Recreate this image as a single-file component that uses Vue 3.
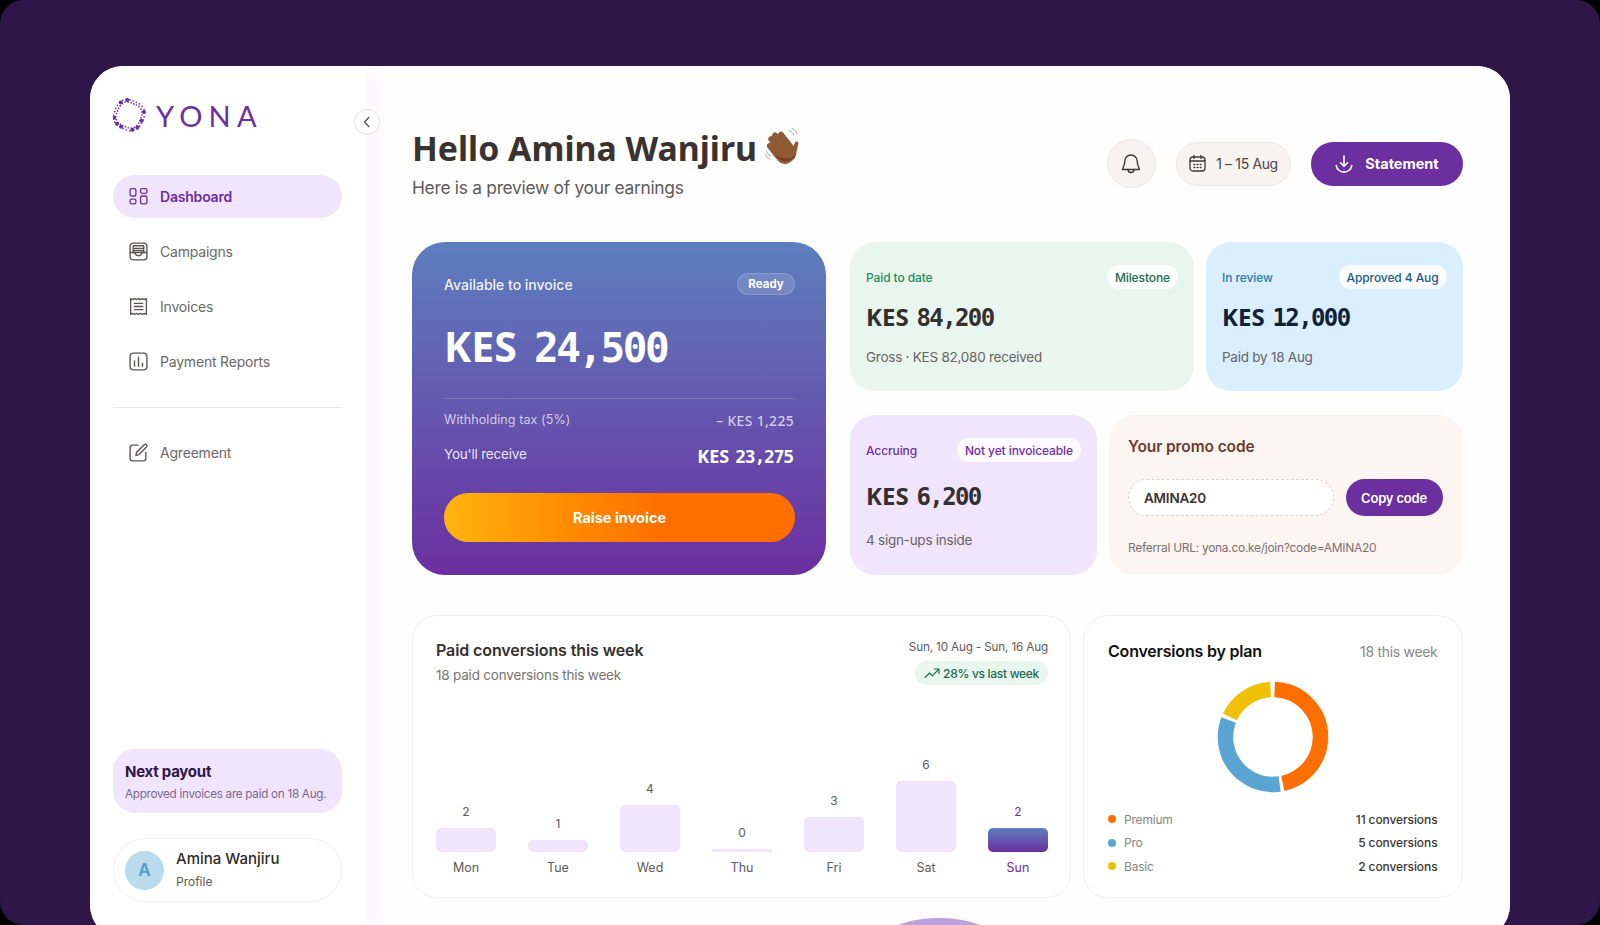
<template>
  <div class="page">
    <div class="window">
      <aside class="sidebar">
        <div class="logo">
          <svg width="34" height="34" viewBox="0 0 34 34">
            <circle v-for="(d, i) in logoDots" :key="i" :cx="d.x" :cy="d.y" :r="d.r" fill="#6b2fa0" />
          </svg>
          <span class="logo-text">YONA</span>
        </div>

        <nav class="nav">
          <a v-for="item in navItems" :key="item.label" class="nav-item" :class="{ active: item.active }">
            <svg width="21" height="21" viewBox="0 0 20 20" fill="none" stroke="currentColor" stroke-width="1.3" stroke-linecap="round" stroke-linejoin="round">
              <path v-for="(p, i) in item.paths" :key="i" :d="p" />
            </svg>
            {{ item.label }}
          </a>
        </nav>
        <div class="side-divider"></div>
        <a class="nav-item">
          <svg width="21" height="21" viewBox="0 0 20 20" fill="none" stroke="currentColor" stroke-width="1.3" stroke-linecap="round" stroke-linejoin="round">
            <path d="M9.5 3H4.5A2.5 2.5 0 0 0 2 5.5v10A2.5 2.5 0 0 0 4.5 18h10a2.5 2.5 0 0 0 2.5-2.5V10" />
            <path d="M7.5 12.8l.7-3 7.2-7.2a1.5 1.5 0 0 1 2.2 2.2l-7.2 7.2z" />
          </svg>
          Agreement
        </a>

        <div class="payout">
          <div class="payout-title">Next payout</div>
          <div class="payout-text">Approved invoices are paid on 18 Aug.</div>
        </div>
        <div class="profile">
          <div class="avatar">A</div>
          <div class="profile-info">
            <div class="profile-name">Amina Wanjiru</div>
            <div class="profile-sub">Profile</div>
          </div>
        </div>
      </aside>

      <button class="collapse">
        <svg width="12" height="12" viewBox="0 0 12 12" fill="none" stroke="#4a4a4a" stroke-width="1.2" stroke-linecap="round" stroke-linejoin="round">
          <path d="M7.8 1.5L3.5 6l4.3 4.5" />
        </svg>
      </button>

      <main class="main">
        <header class="header">
          <div>
            <h1 class="title">
              Hello Amina Wanjiru
              <svg class="wave" width="38" height="38" viewBox="0 0 38 38">
                <g transform="rotate(-38 20 24)" fill="#8f5a34" stroke="#74442a" stroke-width=".5">
                  <rect x="8.500" y="8" width="5.400" height="18" rx="2.700" />
                  <rect x="13.800" y="3.500" width="5.400" height="22" rx="2.700" />
                  <rect x="19.100" y="3" width="5.400" height="22" rx="2.700" />
                  <rect x="24.400" y="6" width="5.200" height="20" rx="2.600" />
                  <rect x="8.500" y="17" width="21" height="19" rx="9" stroke="none" />
                </g>
                <path d="M25 26l5-10.500c.9-1.800 3.700-1 3.300 1.200L31 27c-.9 4-4 6-6 4z" fill="#8f5a34" />
                <path d="M10 27c3 5 8 8.500 14 6.500 3-1 5-3 6-6-2 3-5 4.500-8.500 4.300C17.500 31.500 13 30 10 27z" fill="#6e3f22" />
                <path d="M24 3.500c2.500.8 4 2.400 4.800 4.800M27 1.500c2.500.8 4 2.400 4.800 4.800M1.500 24c.6 2.400 2 3.900 4.300 4.800M.6 27.500c.6 2.200 2 3.700 4.300 4.600" fill="none" stroke="#9a9a9a" stroke-width=".9" stroke-linecap="round" />
              </svg>
            </h1>
            <p class="subtitle">Here is a preview of your earnings</p>
          </div>
          <div class="actions">
            <button class="bell">
              <svg width="24" height="24" viewBox="0 0 24 24" fill="none" stroke="#3c3836" stroke-width="1.4" stroke-linecap="round" stroke-linejoin="round">
                <path d="M12 3a6.200 6.200 0 0 0-6.200 6.200c0 5-2.300 6.300-2.300 8.300h17c0-2-2.300-3.300-2.300-8.300A6.200 6.200 0 0 0 12 3z" />
                <path d="M9 17.500c0 2 1.300 3 3 3s3-1 3-3" />
              </svg>
            </button>
            <div class="date-pill">
              <svg width="19" height="19" viewBox="0 0 19 19" fill="none" stroke="#3c3836" stroke-width="1.3" stroke-linecap="round">
                <rect x="2" y="3" width="15" height="14" rx="3" />
                <path d="M6 1.500v3M13 1.500v3M2 7h15" />
                <path d="M6 10.500h.8M9.100 10.500h.8M12.200 10.500h.8M6 13.500h.8M9.100 13.500h.8M12.200 13.500h.8" stroke-width="1.400" />
              </svg>
              1 – 15 Aug
            </div>
            <button class="statement">
              <svg width="20" height="20" viewBox="0 0 20 20" fill="none" stroke="#fff" stroke-width="1.6" stroke-linecap="round" stroke-linejoin="round">
                <path d="M10 2v10M6.500 8.800L10 12.300l3.500-3.500" />
                <path d="M2.200 11.500a7.900 7.900 0 0 0 15.600 0" />
              </svg>
              Statement
            </button>
          </div>
        </header>

        <section class="cards">
          <div class="hero">
            <div class="hero-top">
              <span class="hero-label">Available to invoice</span>
              <span class="ready">Ready</span>
            </div>
            <div class="hero-amount"><span class="cur">KES</span> 24,500</div>
            <div class="hero-line"></div>
            <div class="hero-row tax">
              <span>Withholding tax (5%)</span>
              <span class="tax-value">– KES 1,225</span>
            </div>
            <div class="hero-row receive">
              <span>You'll receive</span>
              <span class="receive-value"><span class="cur">KES</span> 23,275</span>
            </div>
            <button class="raise">Raise invoice</button>
          </div>

          <div class="stats">
            <div class="stat-row first">
              <div class="stat green">
                <div class="stat-top">
                  <span class="stat-label">Paid to date</span>
                  <span class="chip">Milestone</span>
                </div>
                <div class="stat-amount"><span class="cur">KES</span> 84,200</div>
                <div class="stat-note">Gross · KES 82,080 received</div>
              </div>
              <div class="stat blue">
                <div class="stat-top">
                  <span class="stat-label">In review</span>
                  <span class="chip">Approved 4 Aug</span>
                </div>
                <div class="stat-amount"><span class="cur">KES</span> 12,000</div>
                <div class="stat-note">Paid by 18 Aug</div>
              </div>
            </div>
            <div class="stat-row second">
              <div class="stat violet">
                <div class="stat-top">
                  <span class="stat-label">Accruing</span>
                  <span class="chip">Not yet invoiceable</span>
                </div>
                <div class="stat-amount"><span class="cur">KES</span> 6,200</div>
                <div class="stat-note">4 sign-ups inside</div>
              </div>
              <div class="promo">
                <div class="promo-title">Your promo code</div>
                <div class="promo-row">
                  <div class="promo-code">AMINA20</div>
                  <button class="copy">Copy code</button>
                </div>
                <div class="promo-url">Referral URL: yona.co.ke/join?code=AMINA20</div>
              </div>
            </div>
          </div>
        </section>

        <section class="charts">
          <div class="panel week">
            <div class="week-head">
              <div>
                <div class="week-title">Paid conversions this week</div>
                <div class="week-sub">18 paid conversions this week</div>
              </div>
              <div class="week-side">
                <div class="week-date">Sun, 10 Aug - Sun, 16 Aug</div>
                <div class="trend">
                  <svg width="16" height="12" viewBox="0 0 16 12" fill="none" stroke="#1d6b4f" stroke-width="1.1" stroke-linecap="round" stroke-linejoin="round">
                    <path d="M1 10.500l4.500-4.500 2.800 2.800L14.500 2.500M10.500 2h4.500v4.500" />
                  </svg>
                  28% vs last week
                </div>
              </div>
            </div>
            <div class="bars">
              <div v-for="b in bars" :key="b.day" class="bar-col" :class="{ current: b.current }">
                <span class="bar-value">{{ b.value }}</span>
                <div class="bar" :class="{ zero: b.value === 0 }" :style="{ height: barHeight(b.value) + 'px' }"></div>
                <span class="bar-day">{{ b.day }}</span>
              </div>
            </div>
          </div>

          <div class="panel plan">
            <div class="plan-head">
              <span class="plan-title">Conversions by plan</span>
              <span class="plan-count">18 this week</span>
            </div>
            <svg class="donut" width="112" height="112" viewBox="0 0 112 112">
              <circle
                v-for="s in donut"
                :key="s.color"
                cx="56"
                cy="56"
                r="47.500"
                fill="none"
                :stroke="s.color"
                stroke-width="15.500"
                pathLength="360"
                :stroke-dasharray="s.sweep + ' ' + (360 - s.sweep)"
                :transform="'rotate(' + (s.start - 90) + ' 56 56)'"
              />
            </svg>
            <div class="legend">
              <div v-for="l in legend" :key="l.name" class="legend-row">
                <span class="dot" :style="{ background: l.color }"></span>
                <span class="legend-name">{{ l.name }}</span>
                <span class="legend-value">{{ l.value }}</span>
              </div>
            </div>
          </div>
        </section>

        <div class="peek"></div>
      </main>
    </div>
  </div>
</template>

<script setup>
const navItems = [
  {
    label: 'Dashboard',
    active: true,
    paths: [
      'M3.500 2.500h2.500a1.500 1.500 0 0 1 1.500 1.500v4a1.500 1.500 0 0 1-1.500 1.500H3.500A1.500 1.500 0 0 1 2 8V4a1.500 1.500 0 0 1 1.500-1.500z',
      'M13.500 2.500h3a1.500 1.500 0 0 1 1.500 1.500v1.500a1.500 1.500 0 0 1-1.500 1.500h-3a1.500 1.500 0 0 1-1.500-1.500V4a1.500 1.500 0 0 1 1.500-1.500z',
      'M3.500 12.500h2.500a1.500 1.500 0 0 1 1.500 1.500v1.500a1.500 1.500 0 0 1-1.500 1.500H3.500A1.500 1.500 0 0 1 2 15.500V14a1.500 1.500 0 0 1 1.500-1.500z',
      'M13.500 9.500h3A1.500 1.500 0 0 1 18 11v4.500a1.500 1.500 0 0 1-1.500 1.500h-3a1.500 1.500 0 0 1-1.500-1.500V11a1.500 1.500 0 0 1 1.500-1.500z'
    ]
  },
  {
    label: 'Campaigns',
    paths: [
      'M5 2h10a3 3 0 0 1 3 3v10a3 3 0 0 1-3 3H5a3 3 0 0 1-3-3V5a3 3 0 0 1 3-3z',
      'M2 11h4.500c.5 2 2 3 3.500 3s3-1 3.500-3H18',
      'M5 4.500h10v6.500H5zM5 7h10M5 9h10'
    ]
  },
  {
    label: 'Invoices',
    paths: [
      'M2.500 2.500l1.900 1 1.900-1 1.900 1 1.800-1 1.800 1 1.900-1 1.900 1 1.900-1v15l-1.900-1-1.900 1-1.900-1-1.800 1-1.800-1-1.900 1-1.900-1-1.900 1z',
      'M6 7h8M6 10h8M6 13h8'
    ]
  },
  {
    label: 'Payment Reports',
    paths: [
      'M5 2h10a3 3 0 0 1 3 3v10a3 3 0 0 1-3 3H5a3 3 0 0 1-3-3V5a3 3 0 0 1 3-3z',
      'M6.200 9.500v5M10 6v8.500M13.800 11.500v3'
    ]
  }
]

const bars = [
  { day: 'Mon', value: 2 },
  { day: 'Tue', value: 1 },
  { day: 'Wed', value: 4 },
  { day: 'Thu', value: 0 },
  { day: 'Fri', value: 3 },
  { day: 'Sat', value: 6 },
  { day: 'Sun', value: 2, current: true }
]

const barHeight = (v) => (v === 0 ? 3 : v * 11.8)

const donut = [
  { color: '#ff6f00', start: 2, sweep: 166 },
  { color: '#5aa5d2', start: 172, sweep: 119 },
  { color: '#eec107', start: 295, sweep: 62 }
]

const legend = [
  { name: 'Premium', value: '11 conversions', color: '#ff6f00' },
  { name: 'Pro', value: '5 conversions', color: '#5aa5d2' },
  { name: 'Basic', value: '2 conversions', color: '#eec107' }
]

// bead ring for the logo: fine dots in two tracks, larger beads on top
const logoDots = []
const ringRadius = (deg) => 14 * (1 + 0.05 * Math.cos(((deg + 20) * 4 * Math.PI) / 180))
const toDot = (deg, rad, r) => {
  const a = (deg * Math.PI) / 180
  return { x: +(16 + Math.cos(a) * rad).toFixed(2), y: +(17 + Math.sin(a) * rad).toFixed(2), r }
}
for (let i = 0; i < 54; i++) {
  const deg = (i / 54) * 360
  logoDots.push(toDot(deg, ringRadius(deg) + (i % 2 ? 1.4 : -1.2), 0.85))
}
for (const deg of [-123, -97, -11, 24, 56, 77, 124, 144, 170]) {
  logoDots.push(toDot(deg, ringRadius(deg) + 0.6, 2))
}
</script>

<style scoped>
.page {
  height: 925px;
  overflow: hidden;
  background: #2f1649;
  border-radius: 24px;
  padding: 66px 90px 0;
  box-sizing: border-box;
  font-family: Inter, "Noto Sans", sans-serif;
  color: #2f2b2a;
}

.window {
  position: relative;
  display: flex;
  height: 872px;
  background: #fff;
  border-radius: 33px;
  overflow: hidden;
}

button {
  font-family: inherit;
  border: none;
  cursor: pointer;
}

/* sidebar */
.sidebar {
  flex: 0 0 277px;
  width: 277px;
  min-width: 0;
  box-sizing: border-box;
  padding: 33px 25px 0 23px;
  display: flex;
  flex-direction: column;
  background: #fff;
  box-shadow: 6px 0 30px rgba(107, 47, 160, 0.05);
  z-index: 1;
}

.logo {
  display: flex;
  align-items: center;
  gap: 9px;
  height: 32px;
  color: #6b2fa0;
}

.logo-text {
  font-size: 29px;
  letter-spacing: 6.200px;
  font-weight: 400;
  font-family: Lato, Inter, sans-serif;
}

.nav {
  margin-top: 44px;
  display: flex;
  flex-direction: column;
  gap: 12px;
}

.nav-item {
  display: flex;
  align-items: center;
  gap: 11.500px;
  height: 43px;
  padding-left: 14.500px;
  border-radius: 22px;
  font-size: 14px;
  letter-spacing: -0.2px;
  color: #6c6867;
}

.nav-item svg {
  color: #5a5655;
}

.nav-item.active {
  background: #f1e5fd;
  color: #6b2fa0;
  font-weight: 600;
}

.nav-item.active svg {
  color: #6b2fa0;
}

.side-divider {
  height: 1px;
  background: #e9e7e9;
  margin: 24px 0 23px;
}

.payout {
  margin-top: auto;
  background: #f1e5fd;
  border-radius: 22px;
  padding: 13px 12px 10px;
  height: 64px;
  box-sizing: border-box;
}

.payout-title {
  font-size: 15px;
  font-weight: 700;
  letter-spacing: -0.25px;
  color: #2f1649;
}

.payout-text {
  margin-top: 6px;
  font-size: 11.700px;
  letter-spacing: -0.28px;
  color: #7a6a8c;
  white-space: nowrap;
}

.profile {
  margin: 25px 0 36px;
  height: 64px;
  box-sizing: border-box;
  border: 1px solid #efecf5;
  border-radius: 32px;
  display: flex;
  align-items: center;
  gap: 12px;
  padding-left: 11px;
}

.avatar {
  width: 39px;
  height: 39px;
  border-radius: 50%;
  background: #b9dbeb;
  color: #4f9dc9;
  font-size: 17px;
  font-weight: 600;
  display: flex;
  align-items: center;
  justify-content: center;
}

.profile-info {
  margin-bottom: 2px;
}

.profile-name {
  font-size: 15px;
  font-weight: 500;
  color: #2f2b2a;
}

.profile-sub {
  margin-top: 6px;
  font-size: 12px;
  color: #5d5a59;
}

.collapse {
  position: absolute;
  left: 264px;
  top: 43px;
  z-index: 3;
  width: 26px;
  height: 26px;
  padding: 0;
  border-radius: 50%;
  background: #fff;
  border: 1px solid #e4e2e4;
  display: flex;
  align-items: center;
  justify-content: center;
}

/* main */
.main {
  position: relative;
  flex: 1;
  min-width: 0;
  box-sizing: border-box;
  padding: 61px 47.500px 0 45px;
  background: #fffeff;
}

.header {
  display: flex;
  justify-content: space-between;
  height: 115px;
}

.title {
  margin: 0;
  display: flex;
  align-items: center;
  gap: 8px;
  height: 42px;
  font-family: "Noto Sans", sans-serif;
  font-size: 33.800px;
  font-weight: 700;
  color: #3a3230;
  white-space: nowrap;
}

.wave {
  margin-top: -4px;
}

.subtitle {
  margin: 8px 0 0;
  font-size: 17.400px;
  letter-spacing: -0.3px;
  color: #5d5a59;
}

.actions {
  display: flex;
  align-items: center;
  align-self: flex-start;
  margin-top: 12px;
  height: 49px;
  gap: 20px;
}

.bell {
  width: 49px;
  height: 49px;
  padding: 0;
  border-radius: 50%;
  background: #f6f3f1;
  border: 1px solid #ebe6e3;
  display: flex;
  align-items: center;
  justify-content: center;
}

.date-pill {
  width: 115px;
  height: 44px;
  box-sizing: border-box;
  border-radius: 22px;
  background: #f6f3f1;
  border: 1px solid #ebe6e3;
  display: flex;
  align-items: center;
  justify-content: center;
  gap: 9px;
  font-size: 14px;
  letter-spacing: -0.35px;
  color: #4a4644;
}

.statement {
  width: 152px;
  height: 44px;
  border-radius: 22px;
  background: #6b2fa0;
  color: #fff;
  font-size: 14.500px;
  font-weight: 700;
  display: flex;
  align-items: center;
  justify-content: center;
  gap: 11px;
}

/* cards */
.cards {
  display: flex;
  gap: 24px;
}

.hero {
  width: 414px;
  height: 333px;
  box-sizing: border-box;
  flex: none;
  padding: 31px 31px 32px 32px;
  border-radius: 33px;
  background: linear-gradient(180deg, #5d7fbe 0%, #6b2fa0 100%);
  color: #fff;
}

.hero-top {
  display: flex;
  justify-content: space-between;
  align-items: center;
  height: 22px;
}

.hero-label {
  font-size: 14px;
  font-weight: 500;
  color: #eef0fa;
}

.ready {
  width: 58px;
  height: 22px;
  box-sizing: border-box;
  border-radius: 11px;
  background: rgba(255, 255, 255, 0.14);
  border: 1px solid rgba(255, 255, 255, 0.16);
  font-size: 11.500px;
  font-weight: 700;
  display: flex;
  align-items: center;
  justify-content: center;
}

/* KES is set proportional, the figures monospaced with a dotted zero */
.cur {
  font-family: "Noto Sans", sans-serif;
  letter-spacing: 0;
}

.hero-amount {
  height: 46px;
  margin-top: 28px;
  font-family: "DejaVu Sans Mono", monospace;
  font-weight: 700;
  font-size: 41px;
  line-height: 46px;
  letter-spacing: -2.500px;
  word-spacing: -5px;
}

.hero-line {
  margin-top: 29px;
  height: 1px;
  background: rgba(255, 255, 255, 0.16);
}

.hero-row {
  display: flex;
  justify-content: space-between;
  align-items: center;
}

.tax {
  margin-top: 9px;
  height: 22px;
  font-size: 12.500px;
  letter-spacing: 0.1px;
  color: rgba(255, 255, 255, 0.72);
}

.tax-value {
  margin: 2px 1px 0 0;
  font-family: "Noto Sans", sans-serif;
  font-size: 13.800px;
  font-weight: 500;
  letter-spacing: 0.4px;
}

.receive {
  margin-top: 11px;
  height: 26px;
  font-size: 13.500px;
  letter-spacing: -0.2px;
  color: rgba(255, 255, 255, 0.88);
}

.receive-value {
  margin: 3px 2px 0 0;
  font-family: "DejaVu Sans Mono", monospace;
  font-size: 18px;
  font-weight: 700;
  letter-spacing: -1.200px;
  word-spacing: -3.600px;
  color: #fff;
}

.raise {
  display: block;
  width: 100%;
  height: 49px;
  margin-top: 26px;
  border-radius: 25px;
  background: linear-gradient(90deg, #ffb40f 0%, #ff8c00 35%, #ff6f00 62%, #ff6f00 100%);
  color: #fff;
  font-size: 14.500px;
  font-weight: 700;
}

.stats {
  flex: 1;
  display: flex;
  flex-direction: column;
  gap: 24px;
}

.stat-row {
  display: flex;
  gap: 12px;
}

.first {
  height: 149px;
}

.second {
  height: 160px;
}

.stat {
  box-sizing: border-box;
  border-radius: 25px;
  padding: 23px 16px 0;
}

.first .stat:first-child {
  width: 344px;
}

.first .stat:last-child {
  flex: 1;
}

.second .stat {
  width: 247px;
}

.green {
  background: #e8f6ef;
}

.blue {
  background: #d9eeff;
}

.violet {
  background: #f1e5fd;
}

.stat-top {
  display: flex;
  justify-content: space-between;
  align-items: center;
  height: 24px;
}

.stat-label {
  font-size: 12px;
  font-weight: 500;
  letter-spacing: -0.1px;
}

.chip {
  height: 24px;
  padding: 0 8px;
  border-radius: 12px;
  background: rgba(255, 255, 255, 0.8);
  display: flex;
  align-items: center;
  font-size: 12px;
  font-weight: 500;
  letter-spacing: -0.1px;
  white-space: nowrap;
}

.green .stat-label {
  color: #1f8a5b;
}

.green .chip {
  color: #1d6b4f;
}

.blue .stat-label {
  color: #2b7bb0;
}

.blue .chip {
  color: #1e5a85;
}

.violet .stat-label,
.violet .chip {
  color: #6b2fa0;
}

.stat-amount {
  height: 28px;
  margin-top: 14px;
  font-family: "DejaVu Sans Mono", monospace;
  font-size: 24px;
  line-height: 28px;
  letter-spacing: -1.600px;
  word-spacing: -5px;
  font-weight: 700;
  color: #353030;
}

.blue .stat-amount {
  color: #0f2238;
}

.stat-note {
  margin-top: 18px;
  font-size: 13.500px;
  letter-spacing: -0.25px;
  color: #686463;
}

.violet .stat-amount {
  margin-top: 20px;
}

.violet .stat-note {
  margin-top: 22px;
}

.promo {
  flex: 1;
  box-sizing: border-box;
  border-radius: 25px;
  background: #fdf5f1;
  padding: 22px 20px 0 19px;
}

.promo-title {
  font-size: 15.500px;
  font-weight: 600;
  letter-spacing: -0.1px;
  color: #6b3b30;
}

.promo-row {
  display: flex;
  gap: 12px;
  margin-top: 23px;
}

.promo-code {
  flex: 1;
  height: 37px;
  box-sizing: border-box;
  padding-left: 15px;
  border: 1px dashed #ddd2cd;
  border-radius: 19px;
  background: #fff;
  display: flex;
  align-items: center;
  font-size: 13.500px;
  font-weight: 600;
  letter-spacing: -0.2px;
  color: #3a3230;
}

.copy {
  width: 97px;
  height: 37px;
  border-radius: 19px;
  background: #6b2fa0;
  color: #fff;
  font-size: 13px;
  font-weight: 600;
  letter-spacing: -0.2px;
}

.promo-url {
  margin-top: 24px;
  font-size: 12px;
  letter-spacing: -0.3px;
  color: #7a7270;
  white-space: nowrap;
}

/* charts */
.charts {
  display: flex;
  gap: 12px;
  margin-top: 40px;
}

.panel {
  height: 283px;
  box-sizing: border-box;
  background: #fff;
  border: 1px solid #f0edf6;
  border-radius: 25px;
}

.week {
  width: 659px;
  flex: none;
  padding: 23px 22px 0 23px;
  display: flex;
  flex-direction: column;
}

.week-head {
  display: flex;
  justify-content: space-between;
  height: 64px;
}

.week-title {
  font-size: 16px;
  font-weight: 600;
  letter-spacing: -0.1px;
  line-height: 22px;
  color: #35302f;
}

.week-sub {
  margin-top: 6px;
  font-size: 13.500px;
  letter-spacing: -0.2px;
  color: #767271;
}

.week-side {
  display: flex;
  flex-direction: column;
  align-items: flex-end;
}

.week-date {
  font-size: 11.700px;
  letter-spacing: -0.15px;
  line-height: 16px;
  color: #5d5a59;
}

.trend {
  margin-top: 6px;
  height: 24px;
  padding: 0 9px;
  border-radius: 12px;
  background: #e8f6ef;
  display: flex;
  align-items: center;
  gap: 3px;
  font-size: 12px;
  font-weight: 500;
  letter-spacing: -0.3px;
  color: #1d6b4f;
}

.bars {
  flex: 1;
  display: flex;
  gap: 32px;
  align-items: flex-end;
  padding-bottom: 21px;
}

.bar-col {
  flex: 1;
  display: flex;
  flex-direction: column;
  align-items: center;
}

.bar-value {
  font-size: 12px;
  line-height: 16px;
  margin-bottom: 8px;
  color: #5d5a59;
}

.bar {
  width: 100%;
  background: #f1e5fd;
  border-radius: 5px;
}

.bar.zero {
  border-radius: 0;
}

.bar-day {
  margin-top: 8px;
  font-size: 12.500px;
  line-height: 16px;
  color: #5d5a59;
}

.current .bar {
  background: linear-gradient(180deg, #5d7fbe 0%, #6b2fa0 100%);
}

.current .bar-value,
.current .bar-day {
  color: #6b2fa0;
}

.plan {
  flex: 1;
  padding: 24px 24px 0;
}

.plan-head {
  display: flex;
  justify-content: space-between;
  align-items: center;
  height: 22px;
}

.plan-title {
  font-size: 16px;
  font-weight: 600;
  letter-spacing: -0.2px;
  color: #111;
}

.plan-count {
  font-size: 14px;
  letter-spacing: -0.3px;
  color: #8a8786;
}

.donut {
  display: block;
  margin: 19px auto 0;
}

.legend {
  margin-top: 18px;
  display: flex;
  flex-direction: column;
  gap: 7.700px;
}

.legend-row {
  display: flex;
  align-items: center;
  height: 16px;
  font-size: 12px;
}

.dot {
  width: 8px;
  height: 8px;
  border-radius: 50%;
  margin-right: 8px;
}

.legend-name {
  letter-spacing: -0.2px;
  color: #878483;
}

.legend-value {
  margin-left: auto;
  font-weight: 500;
  letter-spacing: -0.1px;
  color: #3a3633;
}

.peek {
  position: absolute;
  left: 508px;
  top: 852px;
  width: 128px;
  height: 60px;
  border-radius: 50%;
  background: #bd9fdb;
}
</style>

<style>
html,
body {
  margin: 0;
  background: #000;
}
</style>
